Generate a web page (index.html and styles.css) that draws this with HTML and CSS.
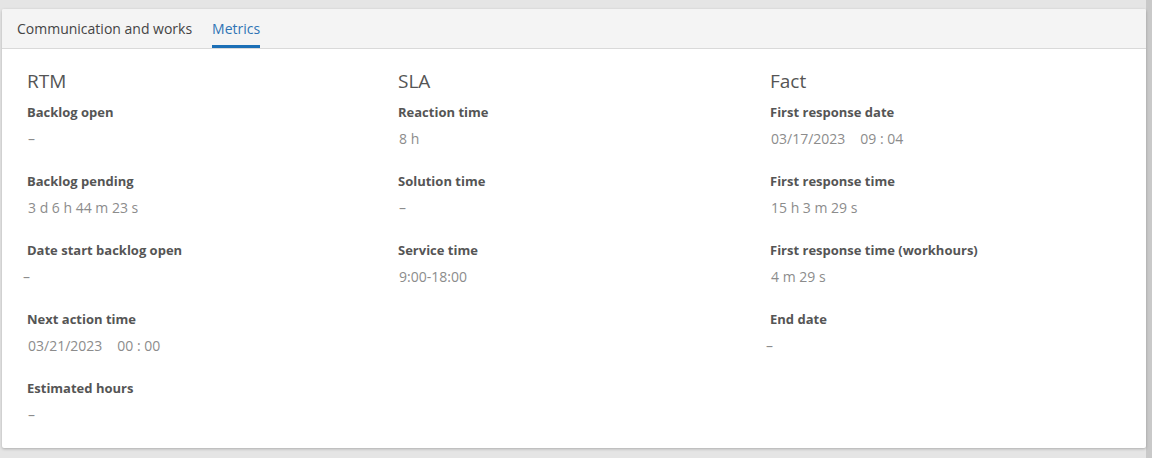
FILE: index.html
```html
<!DOCTYPE html>
<html>
<head>
<meta charset="utf-8">
<link rel="stylesheet" href="styles.css">
</head>
<body>
<div class="page">
  <div class="card">
    <div class="tabs">
      <div class="tab">Communication and works</div>
      <div class="tab active">Metrics</div>
    </div>
    <div class="content">
      <div class="col">
        <h3 class="col-title">RTM</h3>
        <div class="field"><div class="label">Backlog open</div><div class="value">–</div></div>
        <div class="field"><div class="label">Backlog pending</div><div class="value">3 d 6 h 44 m 23 s</div></div>
        <div class="field"><div class="label">Date start backlog open</div><div class="value shift">–</div></div>
        <div class="field"><div class="label">Next action time</div><div class="value"><span class="date">03/21/2023</span><span>00 : 00</span></div></div>
        <div class="field"><div class="label">Estimated hours</div><div class="value">–</div></div>
      </div>
      <div class="col">
        <h3 class="col-title">SLA</h3>
        <div class="field"><div class="label">Reaction time</div><div class="value">8 h</div></div>
        <div class="field"><div class="label">Solution time</div><div class="value">–</div></div>
        <div class="field"><div class="label">Service time</div><div class="value">9:00-18:00</div></div>
      </div>
      <div class="col">
        <h3 class="col-title">Fact</h3>
        <div class="field"><div class="label">First response date</div><div class="value"><span class="date">03/17/2023</span><span>09 : 04</span></div></div>
        <div class="field"><div class="label">First response time</div><div class="value">15 h 3 m 29 s</div></div>
        <div class="field"><div class="label">First response time (workhours)</div><div class="value">4 m 29 s</div></div>
        <div class="field"><div class="label">End date</div><div class="value shift">–</div></div>
      </div>
    </div>
  </div>
</div>
</body>
</html>
```
FILE: styles.css
```css
html, body {
  margin: 0;
  padding: 0;
}
body {
  background: linear-gradient(to right, #e5e5e5 0, #e5e5e5 1146px, #c9c9c9 1146px);
  font-family: "Open Sans", "Liberation Sans", sans-serif;
  height: 458px;
  overflow: hidden;
}
.page {
  padding: 9px 0 0 2px;
}
.card {
  width: 1144px;
  height: 439px;
  background: #fff;
  box-shadow: 0 1px 3px rgba(0, 0, 0, 0.25);
  border-radius: 2px;
  overflow: hidden;
}
.tabs {
  display: flex;
  gap: 20px;
  height: 39px;
  padding-left: 15px;
  background: #f4f4f4;
  border-bottom: 1px solid #d9d9d9;
}
.tab {
  font-size: 14px;
  color: #444;
  line-height: 39px;
  height: 39px;
  box-sizing: border-box;
}
.tab.active {
  color: #2f74b5;
  border-bottom: 3px solid #1c6fb6;
  line-height: 39px;
}
.content {
  display: grid;
  grid-template-columns: 371px 372px 1fr;
  padding: 19px 25px 0 25px;
}
.col-title {
  margin: 0 0 9px 0;
  font-size: 19px;
  font-weight: 400;
  color: #555;
  line-height: 26px;
}
.field {
  height: 69px;
}
.label {
  font-size: 13px;
  font-weight: 700;
  color: #555;
  line-height: 18px;
}
.value {
  margin-top: 8px;
  padding-left: 1px;
  font-size: 14px;
  color: #8c8c8c;
  line-height: 20px;
}
.value.shift {
  margin-left: -5px;
}
.date {
  margin-right: 15px;
}
```
